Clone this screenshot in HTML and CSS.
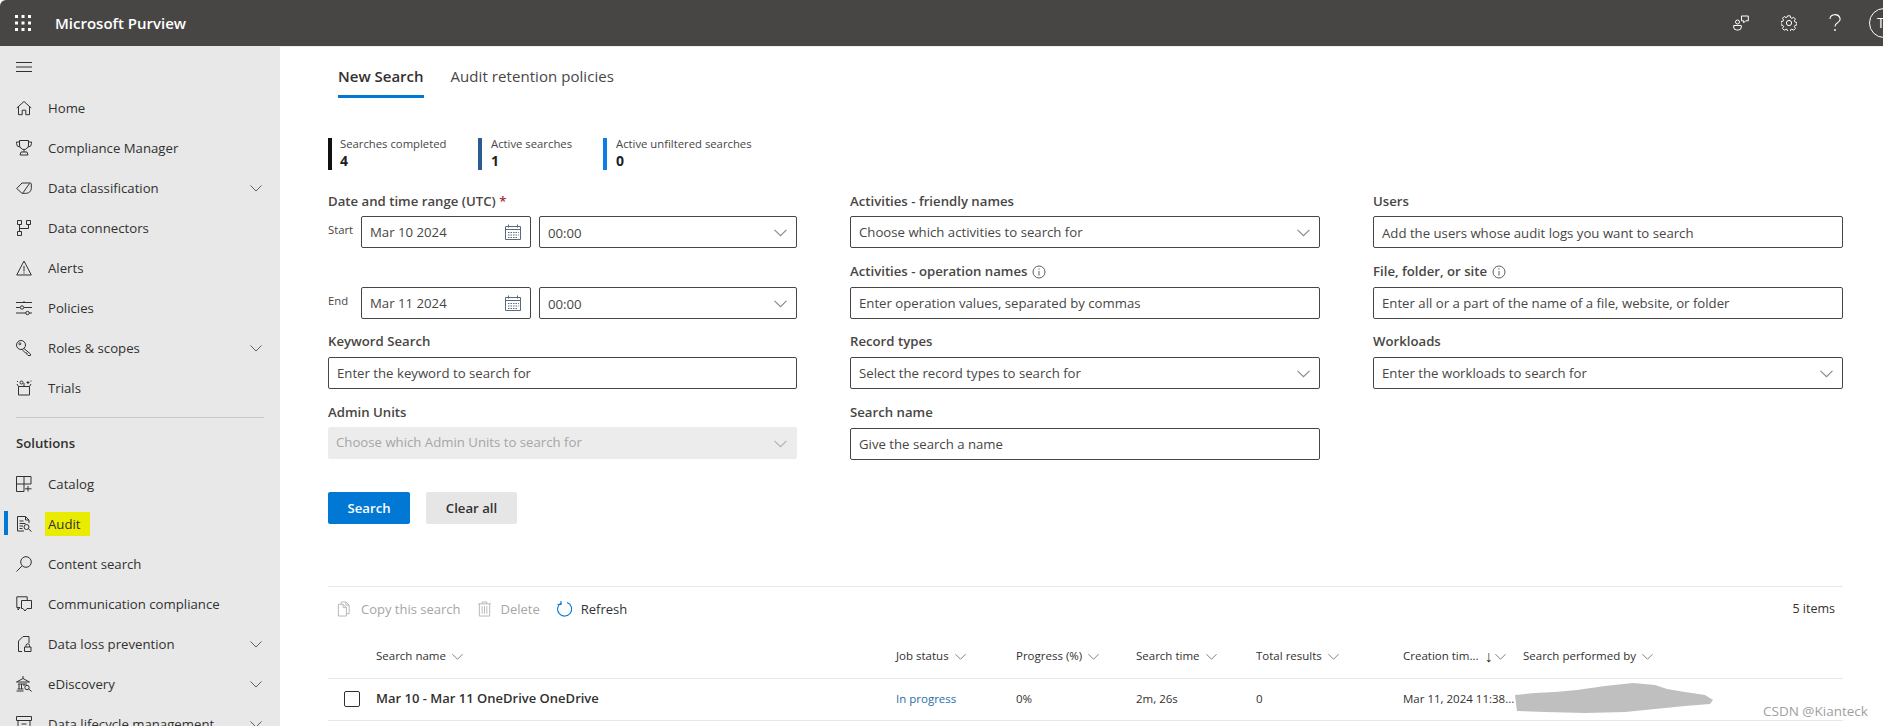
FILE: index.html
```html
<!DOCTYPE html>
<html lang="en">
<head>
<meta charset="utf-8">
<title>Microsoft Purview</title>
<link rel="stylesheet" href="styles.css">
</head>
<body>
<svg class="defs" width="0" height="0" aria-hidden="true">
  <symbol id="chev" viewBox="0 0 12 12"><path d="M.5 3.500 6 9l5.500-5.500" fill="none" stroke="currentColor"/></symbol>
  <symbol id="cal" viewBox="0 0 16 16"><path d="M.5 2.500h15v13H.5zM.5 5.500h15M3.500 .5v3M12.500 .5v3" fill="none" stroke="currentColor"/><path d="M3 8h1.500v1H3zM5.500 8H7v1H5.500zM8 8h1.500v1H8zM10.500 8H12v1h-1.500zM13 8h.8v1H13zM3 10.500h1.500v1H3zM5.500 10.500H7v1H5.500zM8 10.500h1.500v1H8zM10.500 10.500H12v1h-1.500zM13 10.500h.8v1H13zM5.500 13H7v1H5.500zM8 13h1.500v1H8zM3 13h1.500v1H3zM10.500 13H12v1h-1.500z" fill="currentColor"/></symbol>
  <symbol id="info" viewBox="0 0 14 14"><circle cx="7" cy="7" r="6" fill="none" stroke="currentColor"/><path d="M7 6v4.500M7 3.500v1.200" fill="none" stroke="currentColor"/></symbol>
</svg>

<header class="topbar">
  <svg class="waffle" viewBox="0 0 16 16" width="16" height="16"><g fill="#fff"><rect x="0" y="0" width="3" height="3"/><rect x="6.500" y="0" width="3" height="3"/><rect x="13" y="0" width="3" height="3"/><rect x="0" y="6.500" width="3" height="3"/><rect x="6.500" y="6.500" width="3" height="3"/><rect x="13" y="6.500" width="3" height="3"/><rect x="0" y="13" width="3" height="3"/><rect x="6.500" y="13" width="3" height="3"/><rect x="13" y="13" width="3" height="3"/></g></svg>
  <span class="brand">Microsoft Purview</span>
  <div class="top-actions">
    <svg class="top-icon" viewBox="0 0 16 16" width="16" height="16"><g fill="none" stroke="#fff"><circle cx="4.500" cy="7" r="2"/><path d="M.7 10.500h7.600v1.500a3 3 0 0 1-3 3H3.700a3 3 0 0 1-3-3z"/><path d="M8.500 1h6.800v4.800h-2.600l-2 2V5.800H8.500z"/></g></svg>
    <svg class="top-icon" viewBox="0 0 16 16" width="16" height="16"><g fill="none" stroke="#fff"><circle cx="8" cy="8" r="2.600"/><path d="M6.700.7h2.600l.4 2 1.300.6 1.800-1.100 1.800 1.800-1.100 1.800.6 1.300 2 .4v2.600l-2 .4-.6 1.300 1.100 1.800-1.800 1.800-1.800-1.100-1.300.6-.4 2H6.700l-.4-2-1.300-.6-1.800 1.100-1.800-1.800 1.100-1.800-.6-1.300-2-.4V6.700l2-.4.6-1.300-1.100-1.800 1.800-1.800L5 2.500l1.300-.6z" transform="translate(.1 .1) scale(.98)"/></g></svg>
    <svg class="top-icon help" viewBox="0 0 14 18" width="14" height="18"><path d="M2 5a5 4.300 0 1 1 7.500 3.700C7.800 9.800 7 10.600 7 12.500" fill="none" stroke="#fff" stroke-width="1.100"/><circle cx="7" cy="16" r=".9" fill="#fff"/></svg>
    <span class="avatar">T</span>
  </div>
</header>

<div class="shell">
  <nav class="sidebar">
    <div class="nav-item nav-menu">
      <svg class="nav-icon" viewBox="0 0 16 16"><path d="M0 3.500h16M0 8h16M0 12.500h16" fill="none" stroke="currentColor"/></svg>
    </div>
    <a class="nav-item"><svg class="nav-icon" viewBox="0 0 16 16"><path d="M.8 8 8 1.500 15.200 8M2.500 6.700v8h3.700v-4.500h3.600v4.500h3.700v-8" fill="none" stroke="currentColor"/></svg><span>Home</span></a>
    <a class="nav-item"><svg class="nav-icon" viewBox="0 0 16 16"><path d="M3.500 .5h9v4.500a4.500 4.500 0 0 1-9 0zM3.500 2H.5v1.500A3.500 3.500 0 0 0 4 7M12.500 2h3v1.500A3.500 3.500 0 0 1 12 7M8 9.500v2.500M5 12h6l1 3H4z" fill="none" stroke="currentColor"/></svg><span>Compliance Manager</span></a>
    <a class="nav-item"><svg class="nav-icon" viewBox="0 0 16 16"><path d="M.7 8.500 6 3h8.500a1 1 0 0 1 .8.800v4.500a5 5 0 0 1-5 5H6zM13.500 3.500 7 12.800" fill="none" stroke="currentColor"/></svg><span>Data classification</span><svg class="nav-chev"><use href="#chev"/></svg></a>
    <a class="nav-item"><svg class="nav-icon" viewBox="0 0 16 16"><path d="M1.500 .5h4v4h-4zM10.500 .5h4v4h-4zM1.500 11.500h4v4h-4zM3.500 4.500v7M3.500 8.500h9v-4" fill="none" stroke="currentColor"/></svg><span>Data connectors</span></a>
    <a class="nav-item"><svg class="nav-icon" viewBox="0 0 16 16"><path d="M8 1 .7 15h14.600zM8 6v5.500M8 12.500v1.200" fill="none" stroke="currentColor"/></svg><span>Alerts</span></a>
    <a class="nav-item"><svg class="nav-icon" viewBox="0 0 16 16"><path d="M0 2.500h16M0 7.500h4M8 7.500h8M0 13h10M13 13h3" fill="none" stroke="currentColor"/><circle cx="6" cy="7.500" r="1.700" fill="none" stroke="currentColor"/><circle cx="11.500" cy="13" r="1.700" fill="none" stroke="currentColor"/><path d="M8 1v2" stroke="currentColor"/></svg><span>Policies</span></a>
    <a class="nav-item"><svg class="nav-icon" viewBox="0 0 16 16"><circle cx="5" cy="5" r="4.500" fill="none" stroke="currentColor"/><circle cx="3.800" cy="3.800" r="1" fill="none" stroke="currentColor"/><path d="M8 8.500 14.500 14v1.500h-2.500l-1-1v-1.500h-1.500l-4-4" fill="none" stroke="currentColor"/></svg><span>Roles &amp; scopes</span><svg class="nav-chev"><use href="#chev"/></svg></a>
    <a class="nav-item"><svg class="nav-icon" viewBox="0 0 16 16"><path d="M2.500 6.500h11v8.500h-11zM2.500 6.500 1 4M13.500 6.500 15 4M8 6.500V3" fill="none" stroke="currentColor"/><circle cx="5.500" cy="2.500" r="1.500" fill="none" stroke="currentColor"/><path d="M12 1v3M10.500 2.500h3M1 1.500h1M14.500 1h1" fill="none" stroke="currentColor"/></svg><span>Trials</span></a>
    <hr class="nav-rule">
    <div class="nav-title">Solutions</div>
    <a class="nav-item"><svg class="nav-icon" viewBox="0 0 16 16"><path d="M.5 .5h14.500v7.500H8v7.500H.5zM.5 8H8M8 .5V8M12 10v5.500M9 12.800h6.500" fill="none" stroke="currentColor"/></svg><span>Catalog</span></a>
    <a class="nav-item active"><svg class="nav-icon" viewBox="0 0 16 16"><path d="M8 15H1.500V.5h8l3.500 3.500v3M9.500 .5v3.500H13M3.500 5h4M3.500 7.500h6M3.500 10h3.500M3.500 12.500h3" fill="none" stroke="currentColor"/><circle cx="10.500" cy="11" r="2.500" fill="none" stroke="currentColor"/><path d="m12.500 13 3 2.500" stroke="currentColor"/></svg><span class="hl">Audit</span></a>
    <a class="nav-item"><svg class="nav-icon" viewBox="0 0 16 16"><circle cx="10" cy="6" r="5.300" fill="none" stroke="currentColor"/><path d="M6.200 9.800.5 15.500" stroke="currentColor"/></svg><span>Content search</span></a>
    <a class="nav-item"><svg class="nav-icon" viewBox="0 0 16 16"><path d="M4 11.500H.8V.8h10.400V4M5.500 4.500h10v8H11l-2 2.500-2-2.500H5.500zM2 11.500v2.500l2-2.500" fill="none" stroke="currentColor"/></svg><span>Communication compliance</span></a>
    <a class="nav-item"><svg class="nav-icon" viewBox="0 0 16 16"><path d="M6 15.500H2.500V5l4.500-4.500h6V7M8.500 11h6.500v4.500H8.500zM10 11V9.500a1.700 1.700 0 0 1 3.500 0V11" fill="none" stroke="currentColor"/></svg><span>Data loss prevention</span><svg class="nav-chev"><use href="#chev"/></svg></a>
    <a class="nav-item"><svg class="nav-icon" viewBox="0 0 16 16"><path d="M.5 6 7 2.500 13.500 6zM7 2.500V0M2 8h9M3 8v5M5.500 8v5M8 8v2M.5 15h7M1.500 13h6" fill="none" stroke="currentColor"/><circle cx="11" cy="11.500" r="2.200" fill="none" stroke="currentColor"/><path d="m12.700 13 3 2.500" stroke="currentColor"/></svg><span>eDiscovery</span><svg class="nav-chev"><use href="#chev"/></svg></a>
    <a class="nav-item"><svg class="nav-icon" viewBox="0 0 16 16"><path d="M.5 .5h15v4H.5zM2 4.500v11h12v-11M5.500 8h5" fill="none" stroke="currentColor"/></svg><span>Data lifecycle management</span><svg class="nav-chev"><use href="#chev"/></svg></a>
  </nav>

  <main class="content">
    <div class="tabs">
      <span class="tab tab-on">New Search</span>
      <span class="tab">Audit retention policies</span>
    </div>

    <div class="stats">
      <div class="stat stat-a"><span class="stat-label">Searches completed</span><strong class="stat-num">4</strong></div>
      <div class="stat stat-b"><span class="stat-label">Active searches</span><strong class="stat-num">1</strong></div>
      <div class="stat stat-c"><span class="stat-label">Active unfiltered searches</span><strong class="stat-num">0</strong></div>
    </div>

    <div class="form">
      <div class="col">
        <div class="field">
          <div class="label">Date and time range (UTC) <span class="req">*</span></div>
          <div class="date-row">
            <span class="date-tag">Start</span>
            <div class="ctrl date">Mar 10 2024<svg class="cal"><use href="#cal"/></svg></div>
            <div class="ctrl time">00:00<svg class="chev"><use href="#chev"/></svg></div>
          </div>
        </div>
        <div class="field">
          <div class="label">&nbsp;</div>
          <div class="date-row">
            <span class="date-tag">End</span>
            <div class="ctrl date">Mar 11 2024<svg class="cal"><use href="#cal"/></svg></div>
            <div class="ctrl time">00:00<svg class="chev"><use href="#chev"/></svg></div>
          </div>
        </div>
        <div class="field">
          <div class="label">Keyword Search</div>
          <div class="ctrl">Enter the keyword to search for</div>
        </div>
        <div class="field">
          <div class="label">Admin Units</div>
          <div class="ctrl ctrl-off">Choose which Admin Units to search for<svg class="chev"><use href="#chev"/></svg></div>
        </div>
      </div>
      <div class="col">
        <div class="field">
          <div class="label">Activities - friendly names</div>
          <div class="ctrl">Choose which activities to search for<svg class="chev"><use href="#chev"/></svg></div>
        </div>
        <div class="field">
          <div class="label">Activities - operation names <svg class="info"><use href="#info"/></svg></div>
          <div class="ctrl">Enter operation values, separated by commas</div>
        </div>
        <div class="field">
          <div class="label">Record types</div>
          <div class="ctrl">Select the record types to search for<svg class="chev"><use href="#chev"/></svg></div>
        </div>
        <div class="field">
          <div class="label">Search name</div>
          <div class="ctrl">Give the search a name</div>
        </div>
      </div>
      <div class="col">
        <div class="field">
          <div class="label">Users</div>
          <div class="ctrl ctrl-low">Add the users whose audit logs you want to search</div>
        </div>
        <div class="field">
          <div class="label">File, folder, or site <svg class="info"><use href="#info"/></svg></div>
          <div class="ctrl">Enter all or a part of the name of a file, website, or folder</div>
        </div>
        <div class="field">
          <div class="label">Workloads</div>
          <div class="ctrl">Enter the workloads to search for<svg class="chev"><use href="#chev"/></svg></div>
        </div>
      </div>
    </div>

    <div class="buttons">
      <span class="btn btn-primary">Search</span>
      <span class="btn btn-plain">Clear all</span>
    </div>

    <section class="results">
      <div class="toolbar">
        <span class="tool tool-off"><svg class="tool-icon" viewBox="0 0 16 16"><path d="M4.500 3V.5h5l3.500 3.500v9H10M9.500 .5V4H13M1.500 3h5l3.500 3.500v9h-8.500zM6.500 3v3.500H10" fill="none" stroke="currentColor"/></svg>Copy this search</span>
        <span class="tool tool-off"><svg class="tool-icon" viewBox="0 0 16 16"><path d="M1 2.500h14M5.500 2.500V.5h5v2M2.500 2.500v13h11v-13M5.500 5v8M8 5v8M10.500 5v8" fill="none" stroke="currentColor"/></svg>Delete</span>
        <span class="tool"><svg class="tool-icon tool-blue" viewBox="0 0 16 16"><path d="M5.500 1.800A7 7 0 1 0 11 1.500M5 0v3.500H1.500" fill="none" stroke="currentColor" stroke-width="1.100"/></svg>Refresh</span>
        <span class="count">5 items</span>
      </div>
      <div class="row row-head">
        <span></span>
        <span class="th">Search name<svg class="th-chev"><use href="#chev"/></svg></span>
        <span class="th">Job status<svg class="th-chev"><use href="#chev"/></svg></span>
        <span class="th">Progress (%)<svg class="th-chev"><use href="#chev"/></svg></span>
        <span class="th">Search time<svg class="th-chev"><use href="#chev"/></svg></span>
        <span class="th">Total results<svg class="th-chev"><use href="#chev"/></svg></span>
        <span class="th">Creation tim...<span class="arrow">↓</span><svg class="th-chev"><use href="#chev"/></svg></span>
        <span class="th">Search performed by<svg class="th-chev"><use href="#chev"/></svg></span>
      </div>
      <div class="row row-body">
        <span class="check"></span>
        <span class="td-name">Mar 10 - Mar 11 OneDrive OneDrive</span>
        <span class="td-link">In progress</span>
        <span>0%</span>
        <span>2m, 26s</span>
        <span>0</span>
        <span>Mar 11, 2024 11:38...</span>
        <span></span>
      </div>
    </section>
  </main>
</div>

<svg class="smudge" viewBox="0 0 198 30" width="198" height="30"><path d="M0 12 20 10 40 9 62 7 90 3 118 0 140 2 152 6 170 9 190 12 198 17 195 21 170 23 140 26 110 29 70 30 30 29 2 28z" fill="#bfbfbf"/></svg>
<div class="watermark">CSDN @Kianteck</div>
</body>
</html>
```
FILE: styles.css
```css
* { box-sizing: border-box; }
html, body { margin: 0; height: 726px; overflow: hidden; background: #fff; }
body { font: 13.200px/20px "Open Sans", "Noto Sans", sans-serif; color: #323130; position: relative; }
.defs { position: absolute; }

.topbar { height: 46px; background: #484644; color: #fff; display: flex; align-items: center; border-top-left-radius: 6px; }
.waffle { margin-left: 15px; }
.brand { margin-left: 24px; font-size: 15px; font-weight: 600; }
.top-actions { margin-left: auto; display: flex; align-items: center; height: 46px; overflow: hidden; width: 150px; }
.top-icon { margin-left: 32px; flex: none; }
.top-icon:first-child { margin-left: 0; }
.help { margin-left: 31px; }
.avatar { flex: none; margin-left: 27px; width: 30px; height: 30px; border: 1px solid #fff; border-radius: 50%; padding-left: 7px; line-height: 28px; font-size: 14px; }

.shell { display: flex; height: 680px; }
.sidebar { width: 280px; flex: none; background: #e8e8e8; overflow: hidden; padding-top: 1px; }
.nav-item { height: 40px; display: flex; align-items: center; padding-left: 16px; color: #323130; position: relative; white-space: nowrap; }
.nav-menu { height: 41px; padding-bottom: 1px; }
.nav-icon { width: 16px; height: 16px; margin-right: 16px; flex: none; }
.nav-chev { width: 12px; height: 12px; position: absolute; left: 250px; top: 14px; color: #605e5c; }
.nav-rule { border: 0; border-top: 1px solid #c8c8c8; margin: 9px 16px 0; }
.nav-title { height: 46px; line-height: 50px; padding-left: 16px; font-weight: 600; }
.active::before { content: ""; position: absolute; left: 4px; top: 7px; width: 4px; height: 24px; background: #0078d4; }
.hl { background: #e9ec00; margin-left: -3px; padding: 2px 9px 2px 3px; }

.content { flex: 1; min-width: 0; padding: 0 40px 0 48px; border-top: 1px solid #eee; }
.tabs { display: flex; gap: 27px; padding: 13px 0 0 10px; height: 51px; }
.tab { font-size: 15px; line-height: 32px; height: 38px; color: #484644; letter-spacing: .06px; }
.tab-on { font-weight: 600; border-bottom: 3px solid #0078d4; color: #323130; letter-spacing: 0; }

.stats { display: flex; margin-top: 40px; height: 32px; }
.stat { border-left: 4px solid; padding-left: 8px; display: flex; flex-direction: column; font-size: 11.300px; line-height: 11px; color: #484644; }
.stat-a { border-color: #111; width: 150px; }
.stat-b { border-color: #2b5c91; width: 125px; padding-left: 9px; }
.stat-c { border-color: #0f7be4; padding-left: 9px; }
.stat-num { font-size: 14px; line-height: 24px; color: #201f1e; font-weight: 700; }

.form { display: flex; margin-top: 21px; }
.col { display: flex; flex-direction: column; gap: 13.670px; flex: none; width: 470px; margin-right: 53px; }
.col:first-child { width: 469px; }
.col:last-child { margin-right: 0; }
.label { height: 20px; margin-bottom: 5px; font-weight: 600; color: #484644; white-space: nowrap; line-height: 19px; }
.field:first-child .label { line-height: 21px; }
.req { color: #a4262c; }
.info { width: 14px; height: 14px; vertical-align: -3px; margin-left: 1px; color: #605e5c; }
.ctrl { position: relative; height: 32px; border: 1px solid #484644; border-radius: 2px; padding-left: 8px; line-height: 30px; background: #fff; color: #484644; white-space: nowrap; }
.ctrl-low { line-height: 32px; }
.ctrl-off { background: #ececec; border-color: #ececec; color: #a6a6a6; padding-left: 7px; margin-top: -1px; line-height: 28px; }
.chev { position: absolute; right: 9px; top: 9px; width: 13px; height: 13px; color: #8a8886; }
.ctrl-off .chev { color: #b0b0b0; }
.date-row { display: flex; gap: 8px; position: relative; }
.date-tag { width: 25px; font-size: 11.300px; line-height: 27px; color: #484644; }
.date { width: 170px; flex: none; }
.time { flex: 1; line-height: 32px; }
.cal { position: absolute; right: 9px; top: 7px; width: 16px; height: 16px; color: #5a6a7a; }

.buttons { display: flex; gap: 16px; margin-top: 32px; }
.btn { height: 32px; border-radius: 2px; line-height: 32px; text-align: center; font-weight: 600; }
.btn-primary { width: 82px; background: #0078d4; color: #fff; }
.btn-plain { width: 91px; background: #e6e6e6; color: #323130; }

.results { margin-top: 62px; border-top: 1px solid #e8e8e8; }
.toolbar { height: 45px; display: flex; align-items: center; padding-left: 9px; gap: 16px; }
.tool { display: flex; align-items: center; font-size: 13px; color: #323130; }
.tool-off { color: #a6a6a6; }
.tool-icon { width: 15px; height: 16px; margin-right: 9px; color: #b5b5b5; }
.tool-blue { color: #0078d4; width: 16px; }
.count { margin-left: auto; margin-right: 8px; font-size: 12.500px; }
.row { display: grid; grid-template-columns: 48px 520px 120px 120px 120px 147px 120px 1fr; align-items: center; }
.row-head { height: 47px; padding-top: 3px; border-bottom: 1px solid #e8e8e8; font-size: 11.500px; }
.row-body { height: 42px; border-bottom: 1px solid #e8e8e8; font-size: 11.500px; }
.th { display: flex; align-items: center; white-space: nowrap; color: #323130; font-weight: 500; }
.th-chev { width: 11px; height: 11px; margin-left: 6px; color: #797775; }
.arrow { margin-left: 6px; font-size: 16px; font-weight: 400; }
.arrow + .th-chev { margin-left: 3px; }
.check { width: 16px; height: 16px; border: 1px solid #323130; border-radius: 2px; margin-left: 16px; }
.td-name { font-size: 13px; font-weight: 600; color: #323130; line-height: 18px; margin-top: -3px; }
.td-link { color: #2a6ea8; }

.smudge { position: absolute; left: 1515px; top: 683px; }
.watermark { position: absolute; left: 1763px; top: 701px; font-size: 13.500px; color: #a0a0a0; white-space: nowrap; }
```
